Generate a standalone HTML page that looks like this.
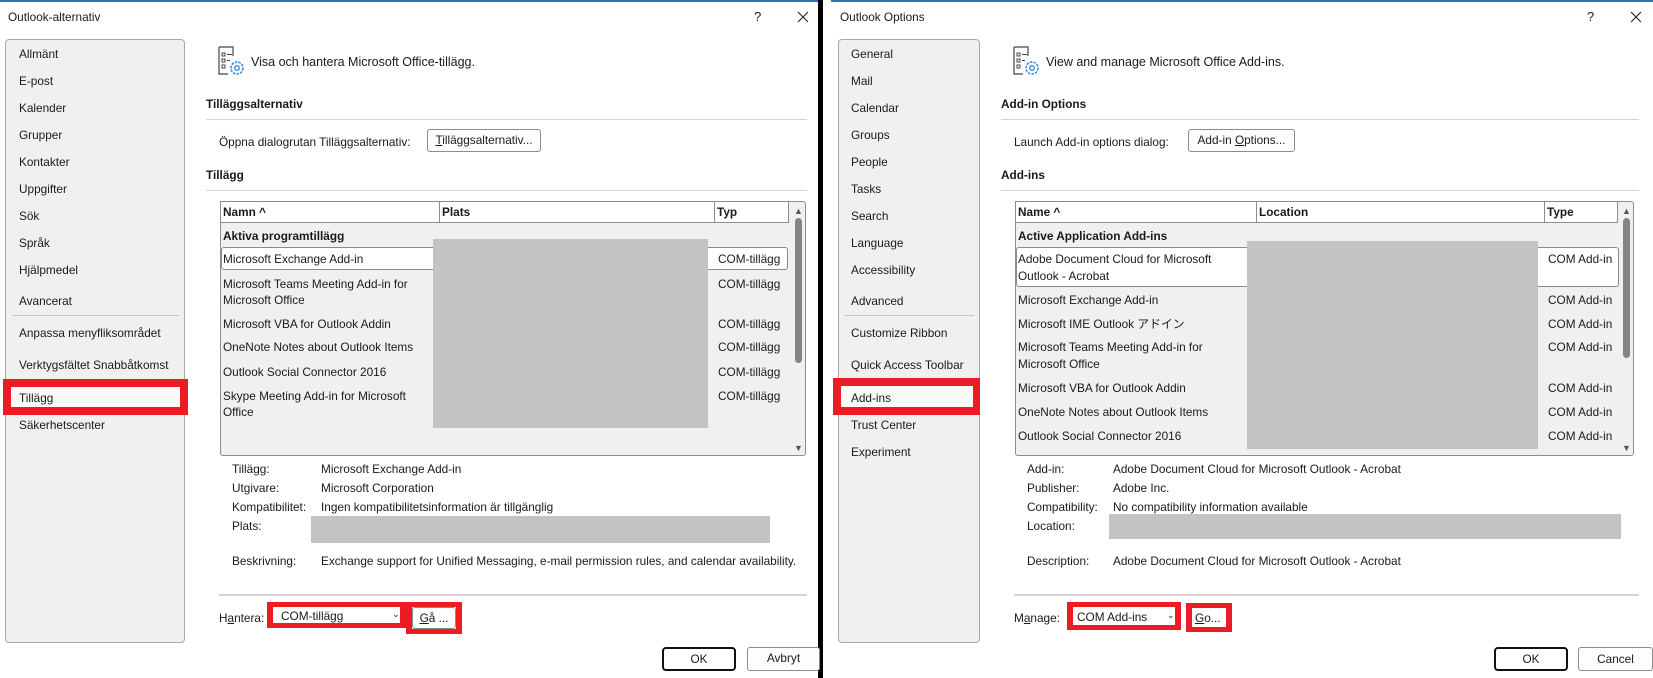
<!DOCTYPE html>
<html><head><meta charset="utf-8"><style>
*{margin:0;padding:0;box-sizing:border-box}
body{width:1653px;height:678px;background:#fff;position:relative;overflow:hidden;font-family:"Liberation Sans","Noto Sans CJK JP",sans-serif;font-size:11.8px;color:#1a1a1a}
.a{position:absolute;white-space:nowrap;line-height:16px}
.b{font-weight:bold}
.box{position:absolute}
.side{position:absolute;top:39px;height:604px;background:#f0f0f0;border:1px solid #a8a8a8;border-radius:4px}
.hl{position:absolute;height:1px;background:#d4d4d4}
.list{position:absolute;top:201px;height:255px;background:#f0f0f0;border:1px solid #8c8c8c;border-radius:3px}
.hdr{position:absolute;top:201px;height:22px;background:#fff;border:1px solid #8c8c8c}
.vd{position:absolute;top:201px;height:22px;width:1px;background:#8c8c8c}
.gray{position:absolute;background:#c3c3c3}
.sel{position:absolute;background:#fff;border:1px solid #8a8a8a;border-radius:3px}
.btn{position:absolute;background:#fdfdfd;border:1px solid #8c8c8c;border-radius:3px;text-align:center;line-height:21px}
.red{position:absolute;border:6px solid #ed1c24}
.thumb{position:absolute;width:7px;background:#858585;border-radius:4px}
.okb{position:absolute;border:2px solid #111;border-radius:4px;text-align:center;line-height:20px;background:#fff}
</style></head><body>
<div class="box" style="left:0;top:0;width:818px;height:2px;background:#2b73c6"></div>
<div class="box" style="left:831px;top:0;width:822px;height:2px;background:#2b73c6"></div>
<div class="box" style="left:818px;top:0;width:5px;height:678px;background:#000"></div>

<!-- LEFT DIALOG -->
<div class="a" style="left:8px;top:9px">Outlook-alternativ</div>
<div class="a" style="left:754px;top:9px;font-size:13px">?</div>
<svg class="box" style="left:797px;top:11px" width="12" height="12"><path d="M1 1L11 11M11 1L1 11" stroke="#222" stroke-width="1.1"/></svg>
<div class="side" style="left:5px;width:180px"></div>
<div class="a" style="left:19px;top:46px">Allmänt</div>
<div class="a" style="left:19px;top:73px">E-post</div>
<div class="a" style="left:19px;top:100px">Kalender</div>
<div class="a" style="left:19px;top:127px">Grupper</div>
<div class="a" style="left:19px;top:154px">Kontakter</div>
<div class="a" style="left:19px;top:181px">Uppgifter</div>
<div class="a" style="left:19px;top:208px">Sök</div>
<div class="a" style="left:19px;top:235px">Språk</div>
<div class="a" style="left:19px;top:262px">Hjälpmedel</div>
<div class="a" style="left:19px;top:293px">Avancerat</div>
<div class="hl" style="left:12px;top:315px;width:167px;background:#c8c8c8"></div>
<div class="a" style="left:19px;top:325px">Anpassa menyfliksområdet</div>
<div class="a" style="left:19px;top:357px">Verktygsfältet Snabbåtkomst</div>
<div class="red" style="left:3px;top:379px;width:185px;height:36px;background:#fafafa;border-width:8px"></div>
<div class="a" style="left:19px;top:390px">Tillägg</div>
<div class="a" style="left:19px;top:417px">Säkerhetscenter</div>

<svg class="box" style="left:218px;top:46px" width="30" height="32" viewBox="0 0 30 32"><path d="M1 1h14v9M1 1v27h9" fill="none" stroke="#444" stroke-width="1.2"/><rect x="4" y="7" width="3" height="3" fill="none" stroke="#444"/><rect x="4" y="13" width="3" height="3" fill="none" stroke="#444"/><rect x="4" y="19" width="3" height="3" fill="none" stroke="#444"/><path d="M9 8.5h5M9 14.5h3" stroke="#444"/><circle cx="19" cy="22" r="6" fill="none" stroke="#2f86d6" stroke-width="1.5" stroke-dasharray="2.5 1.2"/><circle cx="19" cy="22" r="2.3" fill="none" stroke="#2f86d6" stroke-width="1.3"/></svg>
<div class="a" style="left:251px;top:54px;font-size:12.5px">Visa och hantera Microsoft Office-tillägg.</div>
<div class="a b" style="left:206px;top:96px">Tilläggsalternativ</div>
<div class="hl" style="left:206px;top:119px;width:601px"></div>
<div class="a" style="left:219px;top:134px">Öppna dialogrutan Tilläggsalternativ:</div>
<div class="btn" style="left:427px;top:129px;width:114px;height:23px"><u>T</u>illäggsalternativ...</div>
<div class="a b" style="left:206px;top:167px">Tillägg</div>
<div class="hl" style="left:206px;top:190px;width:601px"></div>

<div class="list" style="left:220px;width:586px"></div>
<div class="hdr" style="left:220px;width:569px"></div>
<div class="vd" style="left:439px"></div><div class="vd" style="left:714px"></div>
<div class="a b" style="left:223px;top:204px">Namn ^</div>
<div class="a b" style="left:442px;top:204px">Plats</div>
<div class="a b" style="left:717px;top:204px">Typ</div>
<div class="a" style="left:794px;top:203px;font-size:9px;color:#555">▲</div>
<div class="thumb" style="left:795px;top:218px;height:145px"></div>
<div class="a" style="left:794px;top:440px;font-size:9px;color:#555">▼</div>
<div class="a b" style="left:223px;top:228px">Aktiva programtillägg</div>
<div class="sel" style="left:221px;top:247px;width:567px;height:23px"></div>
<div class="gray" style="left:433px;top:239px;width:275px;height:189px"></div>
<div class="a" style="left:223px;top:251px">Microsoft Exchange Add-in</div>
<div class="a" style="left:223px;top:276px">Microsoft Teams Meeting Add-in for</div>
<div class="a" style="left:223px;top:292px">Microsoft Office</div>
<div class="a" style="left:223px;top:316px">Microsoft VBA for Outlook Addin</div>
<div class="a" style="left:223px;top:339px">OneNote Notes about Outlook Items</div>
<div class="a" style="left:223px;top:364px">Outlook Social Connector 2016</div>
<div class="a" style="left:223px;top:388px">Skype Meeting Add-in for Microsoft</div>
<div class="a" style="left:223px;top:404px">Office</div>
<div class="a" style="left:718px;top:251px">COM-tillägg</div>
<div class="a" style="left:718px;top:276px">COM-tillägg</div>
<div class="a" style="left:718px;top:316px">COM-tillägg</div>
<div class="a" style="left:718px;top:339px">COM-tillägg</div>
<div class="a" style="left:718px;top:364px">COM-tillägg</div>
<div class="a" style="left:718px;top:388px">COM-tillägg</div>

<div class="a" style="left:232px;top:461px">Tillägg:</div>
<div class="a" style="left:321px;top:461px">Microsoft Exchange Add-in</div>
<div class="a" style="left:232px;top:480px">Utgivare:</div>
<div class="a" style="left:321px;top:480px">Microsoft Corporation</div>
<div class="a" style="left:232px;top:499px">Kompatibilitet:</div>
<div class="a" style="left:321px;top:499px">Ingen kompatibilitetsinformation är tillgänglig</div>
<div class="a" style="left:232px;top:518px">Plats:</div>
<div class="gray" style="left:311px;top:516px;width:459px;height:27px"></div>
<div class="a" style="left:232px;top:553px">Beskrivning:</div>
<div class="a" style="left:321px;top:553px">Exchange support for Unified Messaging, e-mail permission rules, and calendar availability.</div>
<div class="box" style="left:219px;top:594px;width:588px;height:2px;background:#d3d3d3"></div>
<div class="a" style="left:219px;top:610px">H<u>a</u>ntera:</div>
<div class="red" style="left:267px;top:602px;width:139px;height:26px;border-width:5px 6px 5px 6px;background:#fff"></div>
<div class="a" style="left:281px;top:608px">COM-tillägg</div>
<div class="a" style="left:392px;top:606px;font-size:9px">⌄</div>
<div class="red" style="left:406px;top:602px;width:56px;height:32px;border-width:5px 6px 5px 6px"></div>
<div class="btn" style="left:412px;top:607px;width:44px;height:22px"><u>G</u>å ...</div>
<div class="okb" style="left:662px;top:647px;width:74px;height:24px">OK</div>
<div class="btn" style="left:747px;top:647px;width:73px;height:24px">Avbryt</div>

<!-- RIGHT DIALOG -->
<div class="a" style="left:840px;top:9px">Outlook Options</div>
<div class="a" style="left:1587px;top:9px;font-size:13px">?</div>
<svg class="box" style="left:1630px;top:11px" width="12" height="12"><path d="M1 1L11 11M11 1L1 11" stroke="#222" stroke-width="1.1"/></svg>
<div class="side" style="left:838px;width:142px"></div>
<div class="a" style="left:851px;top:46px">General</div>
<div class="a" style="left:851px;top:73px">Mail</div>
<div class="a" style="left:851px;top:100px">Calendar</div>
<div class="a" style="left:851px;top:127px">Groups</div>
<div class="a" style="left:851px;top:154px">People</div>
<div class="a" style="left:851px;top:181px">Tasks</div>
<div class="a" style="left:851px;top:208px">Search</div>
<div class="a" style="left:851px;top:235px">Language</div>
<div class="a" style="left:851px;top:262px">Accessibility</div>
<div class="a" style="left:851px;top:293px">Advanced</div>
<div class="hl" style="left:844px;top:315px;width:130px;background:#c8c8c8"></div>
<div class="a" style="left:851px;top:325px">Customize Ribbon</div>
<div class="a" style="left:851px;top:357px">Quick Access Toolbar</div>
<div class="red" style="left:833px;top:378px;width:147px;height:37px;background:#fafafa;border-width:8px 7px 8px 8px"></div>
<div class="a" style="left:851px;top:390px">Add-ins</div>
<div class="a" style="left:851px;top:417px">Trust Center</div>
<div class="a" style="left:851px;top:444px">Experiment</div>

<svg class="box" style="left:1013px;top:46px" width="30" height="32" viewBox="0 0 30 32"><path d="M1 1h14v9M1 1v27h9" fill="none" stroke="#444" stroke-width="1.2"/><rect x="4" y="7" width="3" height="3" fill="none" stroke="#444"/><rect x="4" y="13" width="3" height="3" fill="none" stroke="#444"/><rect x="4" y="19" width="3" height="3" fill="none" stroke="#444"/><path d="M9 8.5h5M9 14.5h3" stroke="#444"/><circle cx="19" cy="22" r="6" fill="none" stroke="#2f86d6" stroke-width="1.5" stroke-dasharray="2.5 1.2"/><circle cx="19" cy="22" r="2.3" fill="none" stroke="#2f86d6" stroke-width="1.3"/></svg>
<div class="a" style="left:1046px;top:54px;font-size:12.5px">View and manage Microsoft Office Add-ins.</div>
<div class="a b" style="left:1001px;top:96px">Add-in Options</div>
<div class="hl" style="left:1001px;top:119px;width:638px"></div>
<div class="a" style="left:1014px;top:134px">Launch Add-in options dialog:</div>
<div class="btn" style="left:1188px;top:129px;width:107px;height:23px">Add-in <u>O</u>ptions...</div>
<div class="a b" style="left:1001px;top:167px">Add-ins</div>
<div class="hl" style="left:1001px;top:190px;width:638px"></div>

<div class="list" style="left:1015px;width:619px"></div>
<div class="hdr" style="left:1015px;width:603px"></div>
<div class="vd" style="left:1256px"></div><div class="vd" style="left:1544px"></div>
<div class="a b" style="left:1018px;top:204px">Name ^</div>
<div class="a b" style="left:1259px;top:204px">Location</div>
<div class="a b" style="left:1547px;top:204px">Type</div>
<div class="a" style="left:1622px;top:203px;font-size:9px;color:#555">▲</div>
<div class="thumb" style="left:1623px;top:218px;height:140px"></div>
<div class="a" style="left:1622px;top:440px;font-size:9px;color:#555">▼</div>
<div class="a b" style="left:1018px;top:228px">Active Application Add-ins</div>
<div class="sel" style="left:1016px;top:247px;width:603px;height:40px"></div>
<div class="gray" style="left:1247px;top:241px;width:291px;height:208px"></div>
<div class="a" style="left:1018px;top:251px">Adobe Document Cloud for Microsoft</div>
<div class="a" style="left:1018px;top:268px">Outlook - Acrobat</div>
<div class="a" style="left:1018px;top:292px">Microsoft Exchange Add-in</div>
<div class="a" style="left:1018px;top:316px">Microsoft IME Outlook アドイン</div>
<div class="a" style="left:1018px;top:339px">Microsoft Teams Meeting Add-in for</div>
<div class="a" style="left:1018px;top:356px">Microsoft Office</div>
<div class="a" style="left:1018px;top:380px">Microsoft VBA for Outlook Addin</div>
<div class="a" style="left:1018px;top:404px">OneNote Notes about Outlook Items</div>
<div class="a" style="left:1018px;top:428px">Outlook Social Connector 2016</div>
<div class="a" style="left:1548px;top:251px">COM Add-in</div>
<div class="a" style="left:1548px;top:292px">COM Add-in</div>
<div class="a" style="left:1548px;top:316px">COM Add-in</div>
<div class="a" style="left:1548px;top:339px">COM Add-in</div>
<div class="a" style="left:1548px;top:380px">COM Add-in</div>
<div class="a" style="left:1548px;top:404px">COM Add-in</div>
<div class="a" style="left:1548px;top:428px">COM Add-in</div>

<div class="a" style="left:1027px;top:461px">Add-in:</div>
<div class="a" style="left:1113px;top:461px">Adobe Document Cloud for Microsoft Outlook - Acrobat</div>
<div class="a" style="left:1027px;top:480px">Publisher:</div>
<div class="a" style="left:1113px;top:480px">Adobe Inc.</div>
<div class="a" style="left:1027px;top:499px">Compatibility:</div>
<div class="a" style="left:1113px;top:499px">No compatibility information available</div>
<div class="a" style="left:1027px;top:518px">Location:</div>
<div class="gray" style="left:1109px;top:514px;width:512px;height:25px"></div>
<div class="a" style="left:1027px;top:553px">Description:</div>
<div class="a" style="left:1113px;top:553px">Adobe Document Cloud for Microsoft Outlook - Acrobat</div>
<div class="box" style="left:1014px;top:594px;width:625px;height:2px;background:#d3d3d3"></div>
<div class="a" style="left:1014px;top:610px">M<u>a</u>nage:</div>
<div class="red" style="left:1067px;top:602px;width:114px;height:28px;border-width:5px 6px 5px 6px;background:#fff"></div>
<div class="a" style="left:1077px;top:609px">COM Add-ins</div>
<div class="a" style="left:1167px;top:607px;font-size:9px">⌄</div>
<div class="red" style="left:1186px;top:603px;width:46px;height:29px;border-width:5px 6px 5px 6px;background:#fff"></div>
<div class="a" style="left:1195px;top:610px"><u>G</u>o...</div>
<div class="okb" style="left:1494px;top:647px;width:74px;height:24px">OK</div>
<div class="btn" style="left:1578px;top:647px;width:75px;height:24px;line-height:22px">Cancel</div>
</body></html>
